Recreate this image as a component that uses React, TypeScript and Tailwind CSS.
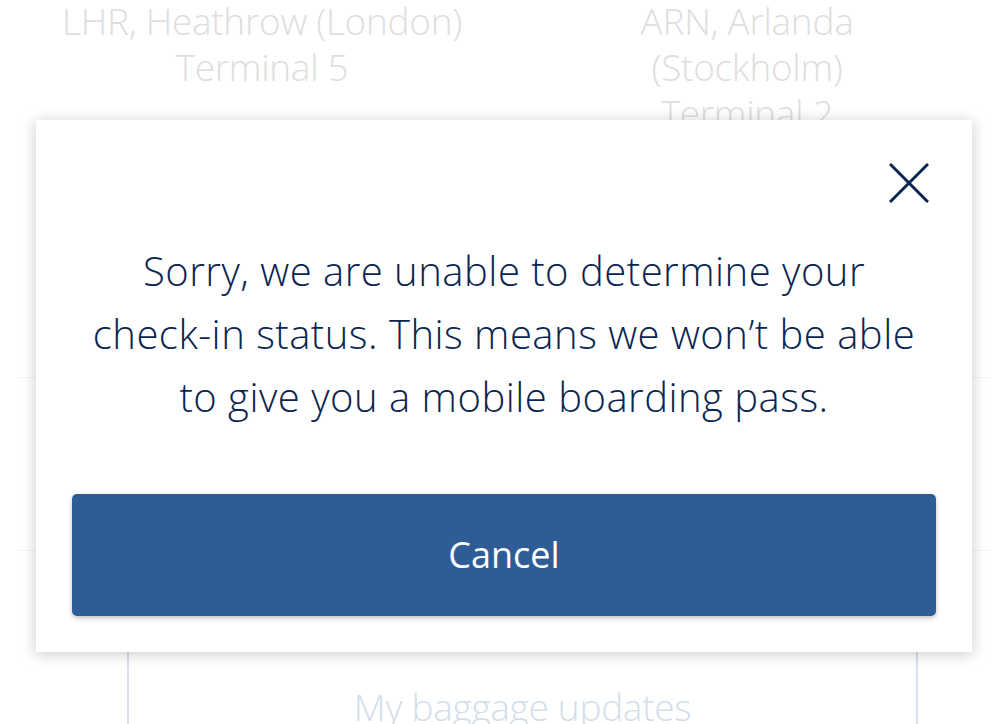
const bgFont = { fontFamily: '"Open Sans", "Liberation Sans", sans-serif' };

export default function App() {
    return (
        <div className="relative w-[1008px] h-[724px] overflow-hidden bg-white" style={bgFont}>
            {/* Page behind the dialog */}
            <div className="flex flex-col">
                <div className="flex items-start -mt-[2px]">
                    <div className="ml-[40px] w-[444px] text-center text-[37px] leading-[46px] font-light text-[#dedede] tracking-[-0.3px]">
                        <div>LHR, Heathrow (London)</div>
                        <div>Terminal 5</div>
                    </div>
                    <div className="relative w-[130px] h-[140px]">
                        <svg
                            className="absolute left-[4px] bottom-[0px]"
                            width="48"
                            height="22"
                            viewBox="0 0 48 22"
                            fill="#c9ccd1"
                        >
                            <path d="M2 6 L12 6 L20 16 L38 16 C42 16 44 18 44 20 L2 20 Z" />
                            <path d="M30 10 L36 8 L40 16 L32 16 Z" />
                        </svg>
                    </div>
                    <div className="ml-[3px] w-[260px] text-center text-[37px] leading-[46px] font-light text-[#dedede] tracking-[-0.3px]">
                        <div>ARN, Arlanda</div>
                        <div>(Stockholm)</div>
                        <div>Terminal 2</div>
                    </div>
                </div>

                <div className="mt-[239px] mx-[18px] border-t border-[#f3f3f3]" />
                <div className="mt-[172px] mx-[18px] border-t border-[#f3f3f3]" />

                <div className="mt-[60px] ml-[127px] mr-[90px] h-[200px] border-x-2 border-[#d6dfea] flex justify-center">
                    <div className="mt-[68px] text-[37px] font-light text-[#d3deeb] tracking-[-0.3px]">
                        My baggage updates
                    </div>
                </div>
            </div>

            {/* Dialog */}
            <div className="absolute left-[36px] top-[120px] w-[936px] h-[532px] bg-white shadow-[0_2px_14px_rgba(0,0,0,0.22)] flex flex-col">
                <div className="flex justify-end pt-[43px] pr-[43px]">
                    <button className="w-[40px] h-[40px] text-[#0b2551]">
                        <svg width="40" height="40" viewBox="0 0 40 40" fill="none" stroke="currentColor" strokeWidth="3">
                            <path d="M1 1 L39 39 M39 1 L1 39" />
                        </svg>
                    </button>
                </div>
                <p className="mt-[36px] text-center text-[40px] leading-[63px] font-light text-[#0b2551] tracking-[0.5px]">
                    Sorry, we are unable to determine your
                    <br />
                    check-in status. This means we won’t be able
                    <br />
                    to give you a mobile boarding pass.
                </p>
                <div className="mt-auto px-[36px] pb-[36px]">
                    <button className="w-full h-[122px] rounded-[5px] bg-[#2e5c96] text-white text-[36px] shadow-[0_2px_5px_rgba(0,0,0,0.25)]">
                        Cancel
                    </button>
                </div>
            </div>
        </div>
    );
}
